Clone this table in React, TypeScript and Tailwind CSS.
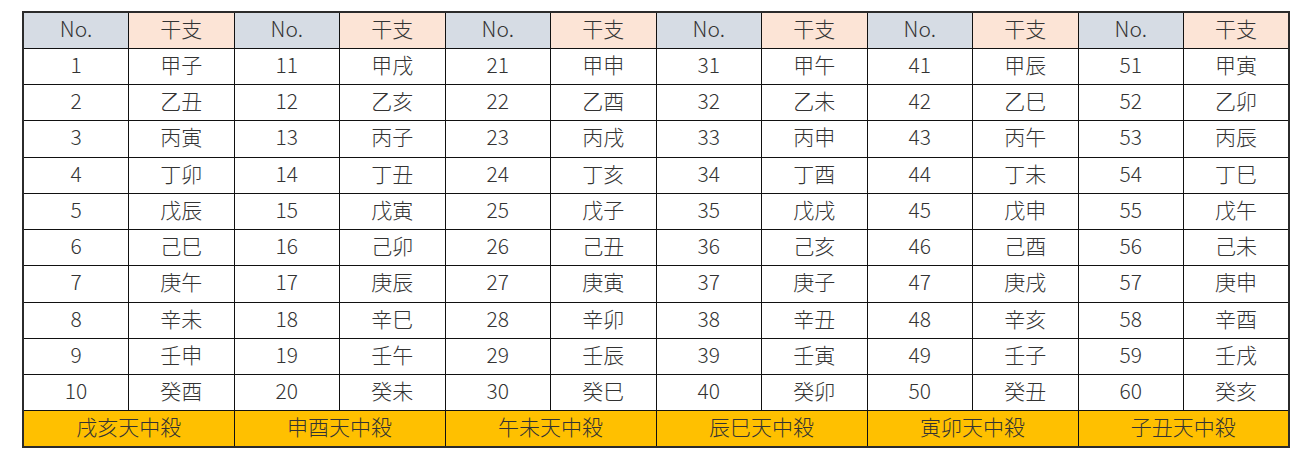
import React from "react";

const stems = ["甲", "乙", "丙", "丁", "戊", "己", "庚", "辛", "壬", "癸"];
const branches = ["子", "丑", "寅", "卯", "辰", "巳", "午", "未", "申", "酉", "戌", "亥"];
const kanshi = (n: number) => stems[(n - 1) % 10] + branches[(n - 1) % 12];
const footers = ["戌亥天中殺", "申酉天中殺", "午未天中殺", "辰巳天中殺", "寅卯天中殺", "子丑天中殺"];

export default function App() {
  const groups = [0, 1, 2, 3, 4, 5];
  const rows = Array.from({ length: 10 }, (_, i) => i);
  return (
    <div
      className="w-[1300px] h-[455px] bg-white relative overflow-hidden"
      style={{ fontFamily: '"Noto Sans CJK JP", "Noto Sans", sans-serif' }}
    >
      <div className="pl-[22px] pt-[11px]">
        <table className="border-collapse border-2 border-[#2b2b2b] w-[1268px] table-fixed text-[21px] leading-none font-light text-[#333]">
          <tbody>
            <tr className="h-[36.25px]">
              {groups.map((g) => (
                <React.Fragment key={g}>
                  <td className="border border-[#111] bg-[#d6dce4] text-center align-middle pb-[4px]">No.</td>
                  <td className="border border-[#111] bg-[#fce4d6] text-center align-middle pb-[4px]">干支</td>
                </React.Fragment>
              ))}
            </tr>
            {rows.map((r) => (
              <tr key={r} className="h-[36.25px]">
                {groups.map((g) => {
                  const n = g * 10 + r + 1;
                  return (
                    <React.Fragment key={g}>
                      <td className="border border-[#111] text-center align-middle pb-[4px]">{n}</td>
                      <td className="border border-[#111] text-center align-middle pb-[4px]">{kanshi(n)}</td>
                    </React.Fragment>
                  );
                })}
              </tr>
            ))}
            <tr className="h-[36.25px]">
              {footers.map((f) => (
                <td key={f} colSpan={2} className="border border-[#111] bg-[#ffc000] text-center align-middle pb-[4px]">
                  {f}
                </td>
              ))}
            </tr>
          </tbody>
        </table>
      </div>
    </div>
  );
}
